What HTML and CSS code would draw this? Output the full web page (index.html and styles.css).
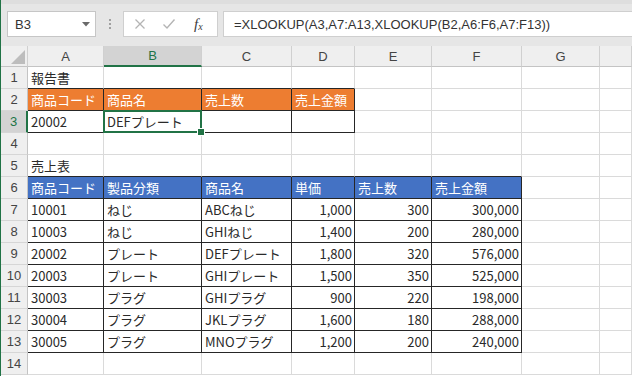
FILE: index.html
```html
<!DOCTYPE html>
<html lang="ja">
<head>
<meta charset="utf-8">
<link rel="stylesheet" href="styles.css">
</head>
<body>
<div class="app">
  <div class="toolbar">
    <div class="namebox"><span>B3</span><svg class="dd" width="8" height="5" viewBox="0 0 8 5"><path d="M0 0H8L4 4.5Z" fill="#6a6a6a"/></svg></div>
    <div class="grip"><i></i><i></i><i></i></div>
    <div class="fbtns">
      <svg width="12" height="12" viewBox="0 0 12 12"><path d="M1.5 1.5L10.5 10.5M10.5 1.5L1.5 10.5" stroke="#b4b4b4" stroke-width="1.3" fill="none"/></svg>
      <svg width="14" height="12" viewBox="0 0 14 12"><path d="M1.5 6.5L5 10L12.5 1.5" stroke="#b4b4b4" stroke-width="1.4" fill="none"/></svg>
      <span class="fx">f<sub>x</sub></span>
    </div>
    <div class="formula">=XLOOKUP(A3,A7:A13,XLOOKUP(B2,A6:F6,A7:F13))</div>
  </div>
  <div class="sheet">
    <div class="ch corner"><svg width="14" height="14" viewBox="0 0 14 14"><path d="M14 0V14H0Z" fill="#bdbdbd"/></svg></div>
    <div class="ch">A</div><div class="ch sel">B</div><div class="ch">C</div><div class="ch">D</div><div class="ch">E</div><div class="ch">F</div><div class="ch">G</div><div class="ch"></div>

    <div class="rh">1</div><div class="c tb">報告書</div><div class="c tb"></div><div class="c tb"></div><div class="c tb"></div><div class="c"></div><div class="c"></div><div class="c"></div><div class="c"></div>

    <div class="rh">2</div><div class="c t or">商品コード</div><div class="c t or">商品名</div><div class="c t or">売上数</div><div class="c t or">売上金額</div><div class="c"></div><div class="c"></div><div class="c"></div><div class="c"></div>

    <div class="rh rsel">3</div><div class="c t">20002</div><div class="c t active">DEFプレート</div><div class="c t"></div><div class="c t"></div><div class="c"></div><div class="c"></div><div class="c"></div><div class="c"></div>

    <div class="rh">4</div><div class="c"></div><div class="c"></div><div class="c"></div><div class="c"></div><div class="c"></div><div class="c"></div><div class="c"></div><div class="c"></div>

    <div class="rh">5</div><div class="c tb">売上表</div><div class="c tb"></div><div class="c tb"></div><div class="c tb"></div><div class="c tb"></div><div class="c tb"></div><div class="c"></div><div class="c"></div>

    <div class="rh">6</div><div class="c t bl">商品コード</div><div class="c t bl">製品分類</div><div class="c t bl">商品名</div><div class="c t bl">単価</div><div class="c t bl">売上数</div><div class="c t bl">売上金額</div><div class="c"></div><div class="c"></div>

    <div class="rh">7</div><div class="c t">10001</div><div class="c t">ねじ</div><div class="c t">ABCねじ</div><div class="c t n">1,000</div><div class="c t n">300</div><div class="c t n">300,000</div><div class="c"></div><div class="c"></div>

    <div class="rh">8</div><div class="c t">10003</div><div class="c t">ねじ</div><div class="c t">GHIねじ</div><div class="c t n">1,400</div><div class="c t n">200</div><div class="c t n">280,000</div><div class="c"></div><div class="c"></div>

    <div class="rh">9</div><div class="c t">20002</div><div class="c t">プレート</div><div class="c t">DEFプレート</div><div class="c t n">1,800</div><div class="c t n">320</div><div class="c t n">576,000</div><div class="c"></div><div class="c"></div>

    <div class="rh">10</div><div class="c t">20003</div><div class="c t">プレート</div><div class="c t">GHIプレート</div><div class="c t n">1,500</div><div class="c t n">350</div><div class="c t n">525,000</div><div class="c"></div><div class="c"></div>

    <div class="rh">11</div><div class="c t">30003</div><div class="c t">プラグ</div><div class="c t">GHIプラグ</div><div class="c t n">900</div><div class="c t n">220</div><div class="c t n">198,000</div><div class="c"></div><div class="c"></div>

    <div class="rh">12</div><div class="c t">30004</div><div class="c t">プラグ</div><div class="c t">JKLプラグ</div><div class="c t n">1,600</div><div class="c t n">180</div><div class="c t n">288,000</div><div class="c"></div><div class="c"></div>

    <div class="rh">13</div><div class="c t">30005</div><div class="c t">プラグ</div><div class="c t">MNOプラグ</div><div class="c t n">1,200</div><div class="c t n">200</div><div class="c t n">240,000</div><div class="c"></div><div class="c"></div>

    <div class="rh">14</div><div class="c"></div><div class="c"></div><div class="c"></div><div class="c"></div><div class="c"></div><div class="c"></div><div class="c"></div><div class="c"></div>
  </div>
</div>
</body>
</html>
```
FILE: styles.css
```css
* { box-sizing: border-box; }
html, body { margin: 0; padding: 0; }
body {
  width: 632px;
  height: 376px;
  overflow: hidden;
  background: #ffffff;
  font-family: "Noto Sans CJK JP", "Noto Sans", sans-serif;
}
.app {
  border-left: 2px solid #217346;
  height: 376px;
  display: flex;
  flex-direction: column;
  margin-left: -1px;
}
.toolbar {
  height: 46px;
  background: #e6e6e6;
  border-top: 4px solid #dedede;
  display: flex;
  align-items: flex-start;
  padding: 7px 0 0 6px;
}
.namebox {
  width: 89px;
  height: 26px;
  background: #fff;
  border: 1px solid #c6c6c6;
  display: flex;
  align-items: center;
  justify-content: space-between;
  padding: 0 5px 0 7px;
  font-family: "Liberation Sans", sans-serif;
  font-size: 13px;
  color: #333;
}
.namebox .dd { margin-top: 1px; }
.grip {
  width: 27px;
  height: 26px;
  display: flex;
  flex-direction: column;
  align-items: center;
  justify-content: center;
  gap: 2px;
}
.grip i {
  display: block;
  width: 2px;
  height: 2px;
  background: #a0a0a0;
}
.fbtns {
  width: 95px;
  height: 26px;
  background: #fff;
  border: 1px solid #cfcfcf;
  display: flex;
  align-items: center;
  padding: 0 0 0 10px;
  gap: 16px;
}
.fbtns .fx {
  font-family: "Liberation Serif", serif;
  font-style: italic;
  font-size: 15px;
  color: #3c3c3c;
  margin-left: 2px;
}
.fbtns .fx sub { font-size: 10px; vertical-align: -1px; }
.formula {
  flex: 1;
  margin-left: 5px;
  height: 26px;
  background: #fff;
  border: 1px solid #cfcfcf;
  border-right: none;
  font-family: "Liberation Sans", sans-serif;
  font-size: 13px;
  color: #333;
  display: flex;
  align-items: center;
  padding-left: 10px;
  white-space: nowrap;
}
.sheet {
  display: grid;
  grid-template-columns: 27px 76px 98px 90px 63px 77px 90px 78px 32px;
  grid-template-rows: 21px repeat(14, 22px);
  font-size: 13px;
  color: #2a2a2a;
}
.ch {
  background: #efefef;
  border-right: 1px solid #d0d0d0;
  border-bottom: 1px solid #c4c4c4;
  display: flex;
  align-items: center;
  justify-content: center;
  font-family: "Liberation Sans", sans-serif;
  font-size: 13px;
  color: #444;
}
.ch.corner {
  justify-content: flex-end;
  align-items: flex-end;
  padding: 0 2px 2px 0;
}
.ch.sel {
  background: #d3d3d3;
  color: #217346;
  border-bottom: 2px solid #217346;
}
.rh {
  background: #efefef;
  border-right: 1px solid #c4c4c4;
  border-bottom: 1px solid #d6d6d6;
  display: flex;
  align-items: center;
  justify-content: center;
  font-family: "Liberation Sans", sans-serif;
  font-size: 13px;
  color: #444;
}
.rh.rsel {
  background: #d3d3d3;
  color: #217346;
  border-right: 2px solid #217346;
}
.c {
  border-right: 1px solid #dadada;
  border-bottom: 1px solid #dadada;
  display: flex;
  align-items: center;
  padding: 0 3px;
  white-space: nowrap;
  overflow: visible;
}
.c.tb { border-bottom-color: #262626; }
.c.t { border-right-color: #262626; border-bottom-color: #262626; }
.c.n { justify-content: flex-end; padding-right: 2px; }
.c.or { background: #ed7d31; color: #fff; }
.c.bl { background: #4472c4; color: #fff; }
.c.active { position: relative; }
.c.active::after {
  content: "";
  position: absolute;
  left: -1px;
  top: -1px;
  right: -1px;
  bottom: -1px;
  border: 2px solid #217346;
}
.c.active::before {
  content: "";
  position: absolute;
  right: -4px;
  bottom: -4px;
  width: 6px;
  height: 6px;
  background: #217346;
  border: 1px solid #fff;
  z-index: 2;
}
```
